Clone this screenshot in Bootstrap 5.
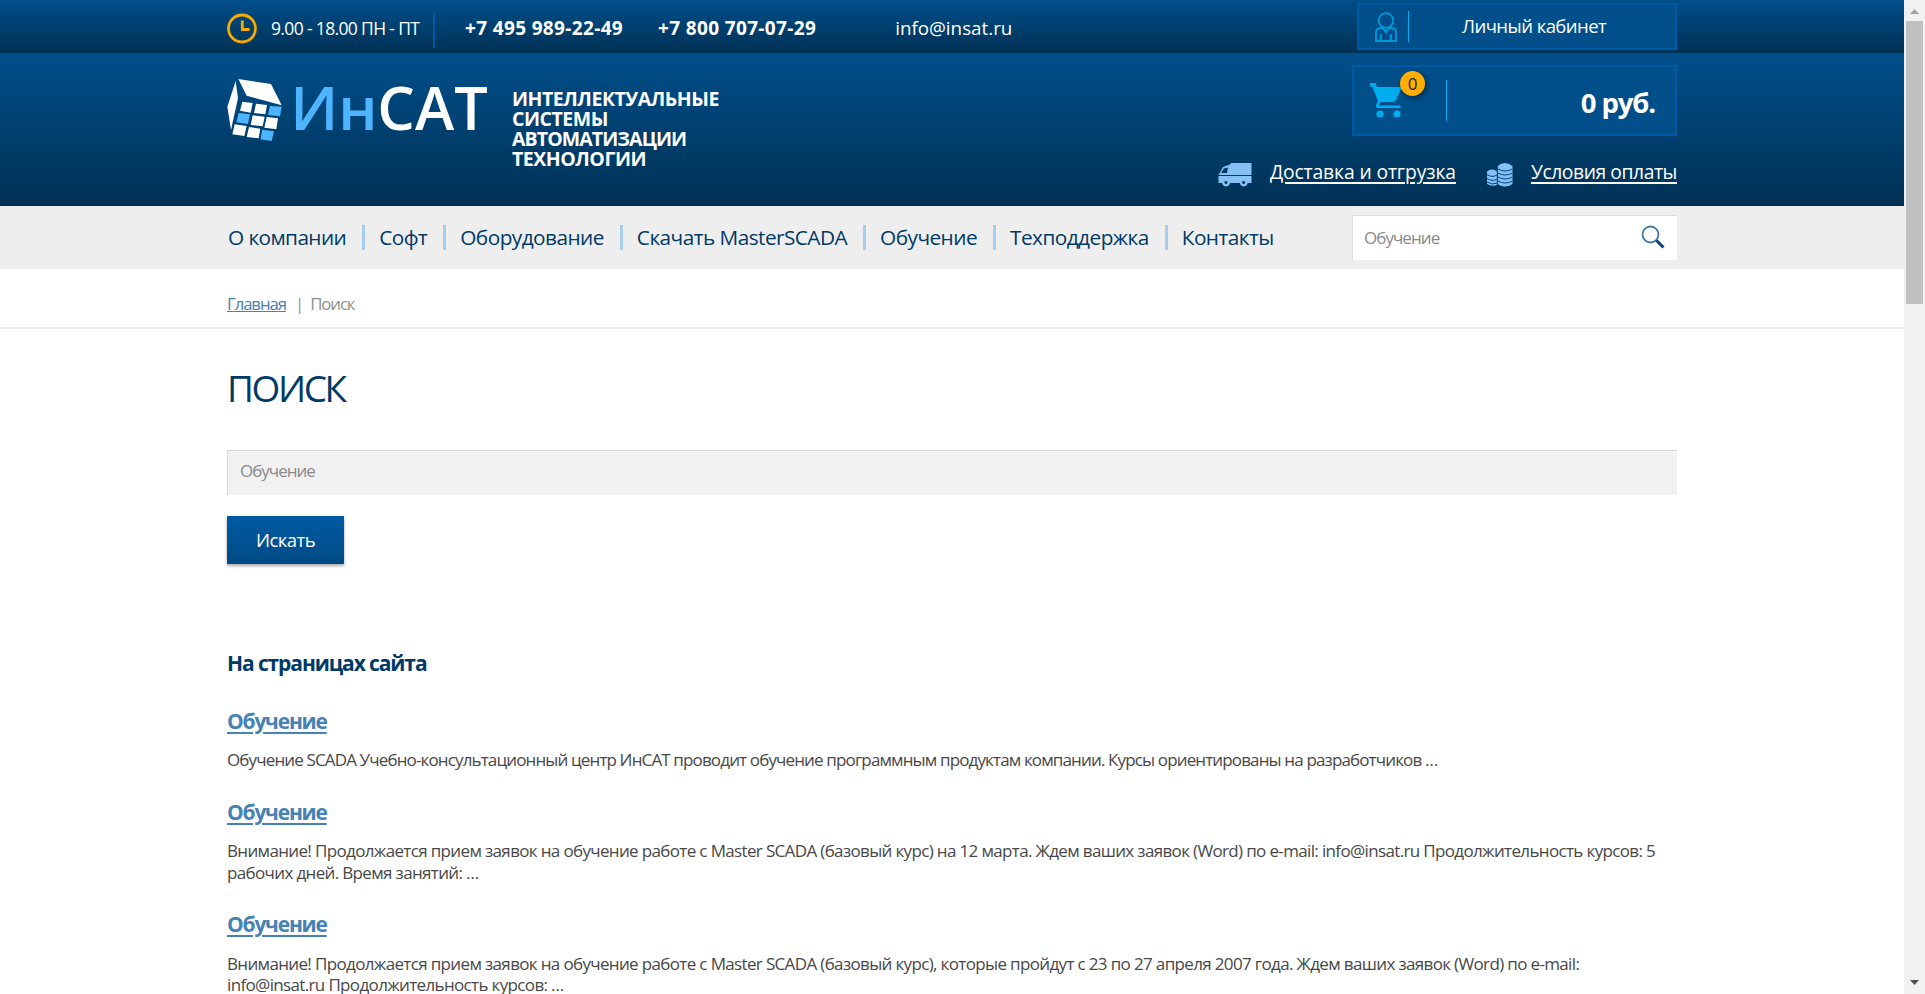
<!DOCTYPE html>
<html lang="ru">
<head>
<meta charset="utf-8">
<title>Поиск — ИнСАТ</title>
<link href="https://cdn.jsdelivr.net/npm/bootstrap@5.3.0/dist/css/bootstrap.min.css" rel="stylesheet">
<style>
body{font-family:"Open Sans","Noto Sans",sans-serif;color:#484848;height:994px;overflow:hidden;background:#fff}
svg{display:block;flex:none}
.wrap{width:1450px;margin:0 auto}
.site{height:994px}
.topbar{height:53px;background:linear-gradient(#004f8b,#003154)}
.masthead{height:153px;background:linear-gradient(#004f8b,#003154)}
.hours,.phone,.mailto{line-height:24px;padding-top:2px;white-space:nowrap}
.hours{font-size:17.5px;letter-spacing:-.65px;margin-left:13px;width:150px}
.tdiv{width:2px;height:35px;background:#0059a5;margin-left:12px}
.phone{font-size:19px;font-weight:700;letter-spacing:.35px}
.mailto{font-size:18.8px}
.panel{background:#004f8b;border:2px solid #0059a5}
.account{width:320px;height:47px;margin-top:3px;padding-left:16px}
.account b{font-weight:400;font-size:18.5px;letter-spacing:-.55px;line-height:24px;margin:0 0 2px 53px}
.vline{width:1px;background:#00aeef}
.cart{width:325px;height:71px;margin-top:12px}
.cnt{left:46px;top:4px;width:25px;height:25px;border-radius:50%;background:#ffae00;color:#222;font-size:17px;line-height:25px;text-align:center;box-shadow:2px 2px 6px rgba(0,0,0,.45)}
.sum{font-size:27.5px;font-weight:700;letter-spacing:-1.1px;margin-right:20px;line-height:34px;padding-top:4px}
.tagline{font-size:19.5px;font-weight:700;letter-spacing:-.47px;line-height:20px;margin:36px 0 0 23px}
.tight{letter-spacing:-.9px}
.extra a{color:#fff;font-size:19.3px;letter-spacing:-.12px;line-height:24px;text-decoration-thickness:2px;text-underline-offset:3px}
.extra .pay{letter-spacing:-.42px}
.menu{height:63px;background:#eee}
.menu ul{height:25px;margin-top:19px}
.menu li{font-size:20.8px;letter-spacing:-.55px;line-height:24px;padding:0 16px 0 14px;border-right:3px solid #a4cdf0;height:25px;white-space:nowrap}
.menu li:first-child{padding-left:1px;letter-spacing:-.6px}.menu li:last-child{border:0;padding-right:0}
.menu a{color:#003a66;text-decoration:none}
.find{width:325px;height:45px;flex:none;margin-top:9px;background:#fff;border:solid #dedede;border-width:1px 0 0 1px;color:#8a8a8a;font-size:17px;letter-spacing:-.95px;padding:0 12px 0 11px}
.crumbs{height:60px;border-bottom:2px solid #eee;font-size:16.8px;letter-spacing:-1.1px;color:#8f8f8f;line-height:24px;padding-top:23px}
.crumbs span{margin:0 7px 0 6px}
.crumbs a,.hit a{color:#4682b4}
h1{font-size:37px;letter-spacing:-2.4px;color:#003a66;line-height:46px;margin:36px 0 0;font-weight:400;text-transform:uppercase}
.q{height:45px;margin-top:39px;background:#f1f1f1;border:solid #d9d9d9;border-width:1px 0 0 1px;color:#8a8a8a;font-size:17px;letter-spacing:-1px;padding:8px 12px;line-height:24px}
.go{width:117px;height:48px;margin-top:21px;padding:0;border:0;border-radius:0;background:linear-gradient(#005ba3,#004a84);color:#fff;font-size:18.5px;letter-spacing:-.55px;line-height:46px;box-shadow:0 2px 3px rgba(0,0,0,.35)}
h2{font-size:21px;font-weight:700;letter-spacing:-1.1px;color:#003a66;line-height:26px;margin:86px 0 0}
.hit{margin-top:28.4px}
.hit h3{font-size:21px;font-weight:700;letter-spacing:-1.2px;line-height:26px;margin:0}
.hit h3 a{text-decoration-thickness:2px;text-underline-offset:3px}
.hit p{font-size:17px;letter-spacing:-.65px;line-height:21.33px;margin:15.5px 0 0;white-space:nowrap}
.first{margin-top:31.6px}
.first p{letter-spacing:-.86px}
.sb{width:21px;background:#f1f1f1}
.thumb{width:17px;height:283px;background:#c1c1c1}
</style>
</head>
<body>
<div class="d-flex">
<div class="site flex-grow-1 overflow-hidden">
  <div class="topbar text-white">
    <div class="wrap d-flex">
      <div class="d-flex align-items-center" style="height:53px">
        <svg width="31" height="31" viewBox="0 0 31 31" class="mt-1" fill="none" stroke="#f8a900"><circle cx="15" cy="15.5" r="13.5" stroke-width="2.8"/><path d="M15.3 7.500V16.500H22.500" stroke-width="2.800"/></svg>
        <span class="hours">9.00 - 18.00 ПН - ПТ</span>
        <span class="tdiv mt-2"></span>
        <span class="phone" style="margin-left:30px">+7 495 989-22-49</span>
        <span class="phone" style="margin-left:35px">+7 800 707-07-29</span>
        <span class="mailto" style="margin-left:79px">info@insat.ru</span>
      </div>
      <div class="panel account d-flex align-items-center ms-auto">
        <svg width="22" height="30" viewBox="0 0 22 30" fill="none" stroke="#0099dc" stroke-width="1.800"><circle cx="11" cy="8.500" r="7.300"/><path d="M1 29V20Q1 17 4 16.500L7 15.500L11 19.500L15 15.500L18 16.500Q21 17 21 20V29ZM6 29V22M16 29V22M8 16L11 20.500L14 16"/></svg>
        <span class="vline" style="height:31px;margin-left:11px"></span>
        <b>Личный кабинет</b>
      </div>
    </div>
  </div>
  <header class="masthead text-white">
    <div class="wrap d-flex">
      <svg width="262" height="64" viewBox="21 234 786 192" style="margin-top:25px">
        <g fill="#fff"><path d="M55 237L153 252L185 316L80 287ZM47 243L54 295L33 390L22 320Z"/>
        <path d="M67 305L98 309L92 338L60 332ZM108 311L141 315L136 343L102 339ZM98 346L134 350L128 379L92 375ZM140 351L174 355L169 388L133 383ZM44 373L80 378L73 408L37 403ZM87 381L121 386L116 415L80 411Z"/></g>
        <path fill="#4db4ff" d="M150 318L185 320L180 349L144 345ZM56 339L90 343L84 372L49 367ZM127 389L162 394L155 423L121 418Z"/>
        <g font-family="Open Sans" font-size="178" font-weight="600"><text x="211" y="389" fill="#4db4ff" textLength="262" lengthAdjust="spacingAndGlyphs">Ин</text><text x="472" y="389" fill="#fff" textLength="331" lengthAdjust="spacingAndGlyphs">САТ</text></g>
      </svg>
      <div class="tagline">ИНТЕЛЛЕКТУАЛЬНЫЕ<br>СИСТЕМЫ<br><span class="tight">АВТОМАТИЗАЦИИ</span><br>ТЕХНОЛОГИИ</div>
      <div class="ms-auto d-flex flex-column align-items-end">
        <div class="panel cart d-flex align-items-center position-relative">
          <svg width="34" height="35" viewBox="0 0 34 35" style="margin-left:15px" fill="#00aeef"><path d="M1 0H6.500L8 4H33L27 17Q26 19 23.500 19H11.500L9.500 22.500H31.500V25H9Q6.500 25 7 22L9 18L3.500 4L1 3Z"/><circle cx="11" cy="31" r="3.600"/><circle cx="28" cy="31" r="3.600"/></svg>
          <span class="cnt position-absolute">0</span>
          <span class="vline" style="height:41px;margin-left:43px"></span>
          <span class="sum ms-auto">0 руб.</span>
        </div>
        <div class="extra d-flex" style="margin-top:24px">
          <svg width="34" height="24" viewBox="0 0 34 24" style="margin-top:3px" fill="#85c1f5"><path d="M13 0H33.500V12H0.500L5 4L12 1.500ZM6 5.500L3 10H9L10 4.500Z" fill-rule="evenodd"/><path d="M.5 13H33.500V20H30A5 5 0 0 0 21.500 20H12.500A5 5 0 0 0 4 20H.5Z"/><path fill-rule="evenodd" d="M8 15.500a4 4 0 1 0 .1 0ZM8 18a1.500 1.500 0 1 1-.1 0ZM25.700 15.500a4 4 0 1 0 .1 0ZM25.700 18a1.500 1.500 0 1 1-.1 0Z"/></svg>
          <a href="#" style="margin-left:18px">Доставка и отгрузка</a>
          <svg width="26" height="24" viewBox="0 0 26 24" style="margin:3px 18px 0 31px"><g fill="#85c1f5"><path d="M0 8.500Q5 4.500 10 8.500V22Q5 24 0 21Z"/><path d="M10.500 3Q18 -3 25.500 3V21Q18 26 10.500 21Z"/></g><g fill="none" stroke="#00437a" stroke-width="1"><path d="M0 11.500Q5 15 10 12M0 15.500Q5 19 10 16M0 19Q5 22.500 10 20M11 6Q18 10 25.500 6M11 10Q18 14 25.500 10M11 14Q18 18 25.500 14M11 18Q18 22 25.500 18M10.300 3V22"/></g></svg>
          <a class="pay" href="#">Условия оплаты</a>
        </div>
      </div>
    </div>
  </header>
  <nav class="menu">
    <div class="wrap d-flex">
      <ul class="list-unstyled d-flex mb-0">
        <li><a href="#">О компании</a></li><li><a href="#">Софт</a></li><li><a href="#">Оборудование</a></li><li><a href="#">Скачать MasterSCADA</a></li><li><a href="#">Обучение</a></li><li><a href="#">Техподдержка</a></li><li><a href="#">Контакты</a></li>
      </ul>
      <div class="find d-flex align-items-center justify-content-between ms-auto"><span>Обучение</span>
        <svg width="24" height="24" viewBox="0 0 24 24" fill="none" style="margin-bottom:2px"><circle cx="9.500" cy="9.500" r="8" stroke="#4379a3" stroke-width="1.800"/><path d="M15.500 15.500L22.500 22.500" stroke="#0d4272" stroke-width="3"/></svg>
      </div>
    </div>
  </nav>
  <div class="crumbs"><div class="wrap"><a href="#">Главная</a> <span>|</span>Поиск</div></div>
  <main class="wrap">
    <h1>Поиск</h1>
    <div class="q">Обучение</div>
    <button class="btn go d-block">Искать</button>
    <h2>На страницах сайта</h2>
    <section class="hit first"><h3><a href="#">Обучение</a></h3><p>Обучение SCADA Учебно-консультационный центр ИнСАТ проводит обучение программным продуктам компании. Курсы ориентированы на разработчиков …</p></section>
    <section class="hit"><h3><a href="#">Обучение</a></h3><p>Внимание! Продолжается прием заявок на обучение работе с Master SCADA (базовый курс) на 12 марта. Ждем ваших заявок (Word) по e-mail: info@insat.ru Продолжительность курсов: 5<br>рабочих дней. Время занятий: …</p></section>
    <section class="hit"><h3><a href="#">Обучение</a></h3><p>Внимание! Продолжается прием заявок на обучение работе с Master SCADA (базовый курс), которые пройдут с 23 по 27 апреля 2007 года. Ждем ваших заявок (Word) по e-mail:<br>info@insat.ru Продолжительность курсов: …</p></section>
  </main>
</div>
<aside class="sb d-flex flex-column align-items-center flex-shrink-0">
  <svg width="21" height="21"><path d="M6 14L10.500 9L15 14Z" fill="#a3a3a3"/></svg>
  <div class="thumb"></div>
  <svg width="21" height="21" class="mt-auto"><path d="M6 7L10.500 12L15 7Z" fill="#505050"/></svg>
</aside>
</div>
<script src="https://cdn.jsdelivr.net/npm/bootstrap@5.3.0/dist/js/bootstrap.bundle.min.js"></script>
</body>
</html>
